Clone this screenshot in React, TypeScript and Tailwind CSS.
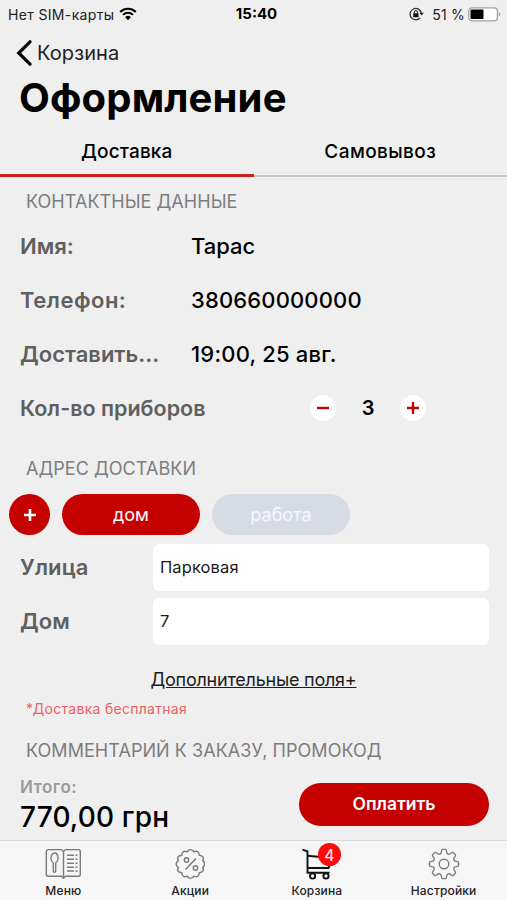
import React, { useState } from "react";

interface Field {
  label: string;
  value: string;
  labelClass?: string;
  valueClass?: string;
}

const contactFields: Field[] = [
  { label: "Имя:", value: "Тарас" },
  { label: "Телефон:", value: "380660000000", labelClass: "tracking-[0.5px]", valueClass: "tracking-[0.15px]" },
  { label: "Доставить...", value: "19:00, 25 авг.", valueClass: "tracking-[0.2px]" },
];

const addressFields: Field[] = [
  { label: "Улица", value: "Парковая" },
  { label: "Дом", value: "7" },
];

function WifiIcon() {
  return (
    <svg width="18" height="14" viewBox="0 0 18 14" fill="none">
      <path d="M1.2 4.9a11.2 11.2 0 0 1 15.6 0" stroke="#000" strokeWidth="2.1" />
      <path d="M4 7.9a7.1 7.1 0 0 1 10 0" stroke="#000" strokeWidth="2" />
      <path d="M9 13.2 6.1 10.2a4.1 4.1 0 0 1 5.8 0z" fill="#000" />
    </svg>
  );
}

function RotationLockIcon() {
  return (
    <svg width="15" height="14" viewBox="0 0 15 14" fill="none">
      <path d="M11.2 10.8A5.7 5.7 0 1 1 12.4 6" stroke="#333" strokeWidth="1.3" />
      <path d="M10.4 5.8h4.4l-2.2 2.8z" fill="#222" />
      <rect x="4.2" y="6.2" width="5.4" height="4" rx="0.5" fill="#111" />
      <path d="M5.3 6.4V5.2a1.6 1.6 0 0 1 3.2 0v1.2" stroke="#111" />
    </svg>
  );
}

function BatteryIcon() {
  return (
    <svg width="33" height="15" viewBox="0 0 33 15" fill="none">
      <rect x="0.8" y="0.8" width="28.6" height="13" rx="3.2" fill="#fff" stroke="#a3a3a3" strokeWidth="1.3" />
      <rect x="2.5" y="2.5" width="13" height="9.6" rx="1" fill="#000" />
      <path d="M30.8 5v4.6c1.2-.5 1.4-1.3 1.4-2.3s-.2-1.800-1.400-2.300z" fill="#a3a3a3" />
    </svg>
  );
}

function StatusBar() {
  return (
    <div className="grid h-7 grid-cols-[1fr_auto_1fr] items-center pl-2 pr-1.5 text-[14px]">
      <div className="flex items-center gap-[5px]">
        <span className="tracking-[0.35px] text-[#222]">Нет SIM-карты</span>
        <WifiIcon />
      </div>
      <span className="pl-1 text-[15px] font-bold">15:40</span>
      <div className="flex items-center justify-end">
        <RotationLockIcon />
        <span className="ml-2 mr-[3px] tracking-[0.2px] text-[#222]">51 %</span>
        <BatteryIcon />
      </div>
    </div>
  );
}

function SectionTitle({ children }: { children: React.ReactNode }) {
  return (
    <h2 className="pl-[26px] text-[18px] leading-6 tracking-[0.05px] text-[#7d7d7d]">
      {children}
    </h2>
  );
}

function MenuIcon() {
  return (
    <svg width="36" height="32" viewBox="-1 0 36 32" fill="none" stroke="#7a7a7a" strokeWidth="1.4">
      <path d="M17.500 3.400 15.500 1.600H2.300a2 2 0 0 0-2 2v22.600a2 2 0 0 0 2 2h13.200l2 2 2-2h12.800a2 2 0 0 0 2-2v-22.600a2 2 0 0 0-2-2H19.500z" />
      <path d="M17.500 3.400v26" />
      <path d="M8.500 5c2.200 0 3.500 2.400 3.500 5.200 0 2.400-1 4-2.300 4.800v8c0 1.600-2.400 1.600-2.400 0v-8c-1.300-.8-2.300-2.400-2.300-4.800C5 7.400 6.300 5 8.500 5z" />
      <path d="M21 7.300h7M21 11.300h7M21 15.300h7M21 19.300h7M21 23h7" />
      <path d="M29.500 7.300h2M29.500 11.300h2M29.500 15.300h2M29.500 19.300h2M29.500 23h2" />
    </svg>
  );
}

function PercentIcon() {
  return (
    <svg width="30" height="32" viewBox="-15.500 -16 30 32" fill="none" stroke="#7a7a7a" strokeWidth="1.4">
      <path d="M-3.400-12.200Q0-16.600 3.400-12.200Q8.200-14.400 8.800-8.800Q14.400-8.200 12.200-3.400Q16.200 0 12.200 3.400Q14.400 8.200 8.800 8.800Q8.200 14.400 3.400 12.200Q0 16.600-3.400 12.200Q-8.200 14.400-8.800 8.800Q-14.400 8.200-12.200 3.400Q-16.600 0-12.200-3.400Q-14.400-8.200-8.800-8.800Q-8.200-14.400-3.400-12.200z" />
      <circle cx="-4" cy="-4" r="2.200" />
      <circle cx="5" cy="4" r="2.200" />
      <path d="M5.500-5.500-5 5.500" strokeWidth="1.600" />
    </svg>
  );
}

function CartIcon() {
  return (
    <svg width="30" height="32" viewBox="0 0 30 32" fill="none" stroke="#111" strokeWidth="1.900">
      <path d="M.5 1.600 5.500 3.500V24.800H27.500" />
      <path d="M5.500 7.800 28 9.800V17L26.500 20H5.500" />
      <circle cx="10.600" cy="28" r="2.600" />
      <circle cx="24" cy="28" r="2.600" />
    </svg>
  );
}

const gearTeeth = [0, 45, 90, 135, 180, 225, 270, 315];

function GearIcon() {
  return (
    <svg width="32" height="32" viewBox="-16 -16 32 32" fill="none" stroke="#7d7d7d" strokeWidth="1.400">
      {gearTeeth.map((angle) => (
        <path
          key={angle}
          transform={`rotate(${angle})`}
          strokeLinejoin="round"
          d="M-4.100-9.900Q-2.700-10.500-2.600-12.500Q-2.500-14.600-1.500-14.600H1.500Q2.500-14.600 2.600-12.500Q2.700-10.500 4.100-9.900"
        />
      ))}
      <circle r="4.800" />
    </svg>
  );
}

const navItems = [
  { label: "Меню", icon: <MenuIcon /> },
  { label: "Акции", icon: <PercentIcon /> },
  { label: "Корзина", icon: <CartIcon />, badge: 4 },
  { label: "Настройки", icon: <GearIcon /> },
];

export default function App() {
  const [tab, setTab] = useState("Доставка");
  const [cutlery, setCutlery] = useState(3);

  return (
    <div className="flex h-[900px] w-[507px] flex-col overflow-hidden bg-[#efefef] font-['Inter',sans-serif] text-black">
      <StatusBar />

      <header>
        <button className="flex h-12 items-center gap-[5px] pl-4 pt-px">
          <svg width="16" height="26" viewBox="0 0 16 26" fill="none">
            <path d="M14 1.800 2.700 13 14 24.200" stroke="#000" strokeWidth="3.200" strokeLinecap="round" />
          </svg>
          <span className="text-[20px] tracking-[0.1px] text-[#222]">Корзина</span>
        </button>
        <h1 className="pl-[19px] text-[40px] font-bold leading-[44px] tracking-[0.15px]">
          Оформление
        </h1>
      </header>

      <div className="mt-[7px] grid h-[50px] grid-cols-2">
        {["Доставка", "Самовывоз"].map((name) => (
          <button
            key={name}
            onClick={() => setTab(name)}
            className={
              tab === name
                ? "border-b-[3px] border-[#cf1f1f] pt-1 text-[19px] font-medium tracking-[0.15px]"
                : "border-b-2 border-[#c6c6c6] pt-[3px] text-[19px] font-medium tracking-[0.4px]"
            }
          >
            {name}
          </button>
        ))}
      </div>

      <section className="pt-[13px]">
        <SectionTitle>КОНТАКТНЫЕ ДАННЫЕ</SectionTitle>
        <div className="pl-5 pt-[5px]">
          {contactFields.map((field) => (
            <div key={field.label} className="flex h-[54px] items-center text-[22px]">
              <span className={`w-[171px] font-semibold text-[#5f5f5f] ${field.labelClass ?? ""}`}>
                {field.label}
              </span>
              <span className={`font-medium ${field.valueClass ?? ""}`}>
                {field.value}
              </span>
            </div>
          ))}
          <div className="flex h-[54px] items-center">
            <span className="w-[290px] text-[21.5px] font-semibold text-[#5f5f5f]">
              Кол-во приборов
            </span>
            <button
              onClick={() => setCutlery(Math.max(1, cutlery - 1))}
              className="flex size-[26px] items-center justify-center rounded-full bg-white"
            >
              <svg width="14" height="14" stroke="#c40000" strokeWidth="2.400">
                <path d="M1 7h12" />
              </svg>
            </button>
            <span className="w-16 text-center text-[20px] font-semibold">
              {cutlery}
            </span>
            <button
              onClick={() => setCutlery(cutlery + 1)}
              className="flex size-[26px] items-center justify-center rounded-full bg-white"
            >
              <svg width="14" height="14" stroke="#c40000" strokeWidth="2.400">
                <path d="M1 7h12M7 1v12" />
              </svg>
            </button>
          </div>
        </div>
      </section>

      <section className="pt-[22px]">
        <SectionTitle>АДРЕС ДОСТАВКИ</SectionTitle>
        <div className="flex items-center gap-3 pl-[9px] pt-[13px]">
          <button className="flex size-[41px] items-center justify-center rounded-full bg-[#c40000]">
            <svg width="12" height="12" stroke="#fff" strokeWidth="2.600">
              <path d="M0 6h12M6 0v12" />
            </svg>
          </button>
          <button className="h-[41px] w-[138px] rounded-full bg-[#c40000] text-[18px] text-white">
            дом
          </button>
          <button className="h-[41px] w-[138px] rounded-full bg-[#d7dbe6] text-[18px] text-[#f4f6fb]">
            работа
          </button>
        </div>
        <div className="pl-5 pr-[18px] pt-[5px]">
          {addressFields.map((field) => (
            <div key={field.label} className="flex h-[54px] items-center">
              <span className="w-[133px] text-[22px] font-semibold tracking-[0.1px] text-[#5f5f5f]">
                {field.label}
              </span>
              <input
                defaultValue={field.value}
                className="h-[47px] w-[336px] rounded-md bg-white px-[7px] text-[16.5px] tracking-[0.1px] text-[#1a1a1a] outline-none"
              />
            </div>
          ))}
        </div>
      </section>

      <button className="mt-5 text-center text-[18px] leading-6 tracking-[-0.23px] text-[#1c1c1c] underline">
        Дополнительные поля+
      </button>
      <p className="pl-[26px] pt-[7px] text-[14px] leading-5 tracking-[0.28px] text-[#ee5f5f]">
        *Доставка бесплатная
      </p>
      <div className="pt-5">
        <SectionTitle>КОММЕНТАРИЙ К ЗАКАЗУ, ПРОМОКОД</SectionTitle>
      </div>

      <div className="flex items-start justify-between pl-5 pr-[18px] pt-3">
        <div>
          <p className="text-[17px] font-semibold leading-6 tracking-[0.4px] text-[#9b9b9b]">
            Итого:
          </p>
          <p className="text-[28px] font-medium leading-9 tracking-[0.15px]">770,00 грн</p>
        </div>
        <button className="mt-2 h-[43px] w-[190px] rounded-full bg-[#c40000] text-[17.5px] font-semibold text-white">
          Оплатить
        </button>
      </div>

      <nav className="mt-auto grid h-[60px] grid-cols-4 border-t border-[#d9d9d9] bg-[#f6f6f6]">
        {navItems.map((item) => (
          <button key={item.label} className="flex flex-col items-center pt-[7px]">
            <span className="relative">
              {item.icon}
              {item.badge && (
                <span className="absolute -top-[5px] left-4 flex size-[23px] items-center justify-center rounded-full bg-[#ff0a0a] text-[16px] text-white">
                  {item.badge}
                </span>
              )}
            </span>
            <span className="mt-[3px] text-[12px] font-medium leading-4 tracking-[0.15px] text-[#222]">
              {item.label}
            </span>
          </button>
        ))}
      </nav>
    </div>
  );
}
